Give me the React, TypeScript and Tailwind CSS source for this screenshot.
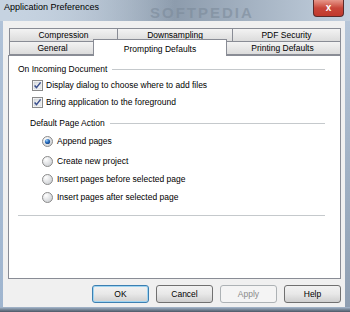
import React from 'react';

// Win7 style "Application Preferences" dialog

const font = { fontFamily: '"Liberation Sans", Arial, sans-serif' };

function CheckBox() {
  return (
    <svg width="11" height="11" viewBox="0 0 11 11" className="shrink-0">
      <defs>
        <linearGradient id="cbg" x1="0" y1="0" x2="1" y2="1">
          <stop offset="0" stopColor="#d9dcdf" />
          <stop offset="1" stopColor="#fafafa" />
        </linearGradient>
      </defs>
      <rect x="0.5" y="0.5" width="10" height="10" fill="#fff" stroke="#8a8a8a" />
      <rect x="2" y="2" width="7" height="7" fill="url(#cbg)" stroke="#c4c8cc" strokeWidth="0.6" />
      <path d="M2.6 5.4 L4.5 7.6 L8.6 2.4" fill="none" stroke="#3a4f8e" strokeWidth="1.5" />
    </svg>
  );
}

function Radio({ on }: { on?: boolean }) {
  return (
    <svg width="11" height="11" viewBox="0 0 11 11" className="shrink-0">
      <defs>
        <radialGradient id="rbg" cx="0.35" cy="0.3" r="0.8">
          <stop offset="0" stopColor="#ffffff" />
          <stop offset="1" stopColor="#c9ccd0" />
        </radialGradient>
        <radialGradient id="rdot" cx="0.35" cy="0.3" r="0.8">
          <stop offset="0" stopColor="#9fd0f5" />
          <stop offset="0.5" stopColor="#2a6fc0" />
          <stop offset="1" stopColor="#143f7c" />
        </radialGradient>
      </defs>
      <circle cx="5.5" cy="5.5" r="5" fill="url(#rbg)" stroke="#8c8c8c" />
      {on && <circle cx="5.5" cy="5.5" r="2.6" fill="url(#rdot)" />}
    </svg>
  );
}

function Tab({ label, w }: { label: string; w: string }) {
  return (
    <div
      className={`${w} h-full flex items-center justify-center border border-[#898c95] -ml-px first:ml-0 bg-gradient-to-b from-[#f3f3f3] to-[#dcdcdc] text-[8.5px] text-black`}
    >
      {label}
    </div>
  );
}

function Btn({ label, def, disabled }: { label: string; def?: boolean; disabled?: boolean }) {
  const cls = disabled
    ? 'border-[#adb2b5] bg-[#f4f4f4] text-[#8a8a8a]'
    : def
    ? 'border-[#3c7fb1] bg-gradient-to-b from-[#f2f2f2] via-[#e8e8e8] to-[#cfcfcf] text-black shadow-[inset_0_0_0_1px_#9fd4f1]'
    : 'border-[#707070] bg-gradient-to-b from-[#f2f2f2] via-[#e8e8e8] to-[#cfcfcf] text-black';
  return (
    <div className={`w-[57px] h-[18px] rounded-[3px] border flex items-center justify-center text-[8.5px] ${cls}`}>
      {label}
    </div>
  );
}

export default function App() {
  return (
    <div className="w-[350px] h-[312px] flex flex-col overflow-hidden bg-[#b4c6dc]" style={font}>
      {/* title bar */}
      <div className="h-[21px] relative bg-gradient-to-r from-[#c8d5e3] via-[#8d9cad] to-[#c3d0de]">
        <div className="absolute inset-0 bg-gradient-to-r from-[#c6d3e1] via-transparent to-transparent" />
        <span className="absolute left-[4px] top-[1px] text-[9px] text-black">Application Preferences</span>
        <span className="absolute left-[150px] top-[2px] text-[15px] font-bold tracking-[2px] text-[#7b8a9a]/60">
          SOFTPEDIA
        </span>
        <div className="absolute left-[313px] top-0 w-[31px] h-[17px] rounded-b-[4px] border border-t-0 border-[#5a2a2a] bg-gradient-to-b from-[#e6968a] via-[#c8463a] to-[#c0392d] flex items-center justify-center">
          <span className="text-white text-[10px] font-bold leading-none">x</span>
        </div>
      </div>

      <div className="flex-1 flex">
        <div className="w-[3px] bg-gradient-to-b from-[#b0c2d8] to-[#9fb5cf]" />

        {/* client area */}
        <div className="flex-1 bg-[#f0f0f0] pt-[7px] pl-[5px] flex flex-col">
          <div className="w-[333px]">
            {/* top tab row */}
            <div className="h-[14px] flex pl-[1px]">
              <Tab label="Compression" w="w-[109px]" />
              <Tab label="Downsampling" w="w-[116px]" />
              <Tab label="PDF Security" w="w-[109px]" />
            </div>
            {/* bottom tab row */}
            <div className="h-[14px] flex pl-[1px] -mt-px">
              <Tab label="General" w="w-[87px]" />
              <div className="relative z-10 w-[134px] h-[17px] -mt-[2px] -ml-[3px] -mr-[2px] bg-white border border-b-0 border-[#898c95] flex items-start justify-center pt-[3px] text-[8.5px] text-black">
                Prompting Defaults
              </div>
              <Tab label="Printing Defaults" w="w-[117px]" />
            </div>

            {/* pane */}
            <div className="h-[224px] bg-white border border-[#898c95] pt-[8px] pl-[9px] pr-[15px] text-[8.5px] text-black">
              <div className="h-[11px] flex items-center">
                <span>On Incoming Document</span>
                <div className="flex-1 ml-[5px] h-[2px] border-t border-[#c5c9cc] border-b border-b-white" />
              </div>
              <div className="mt-[2px] pl-[14px]">
                <div className="h-[17px] flex items-center gap-[3px]">
                  <CheckBox />
                  <span>Display dialog to choose where to add files</span>
                </div>
                <div className="h-[17px] flex items-center gap-[3px]">
                  <CheckBox />
                  <span>Bring application to the foreground</span>
                </div>
              </div>

              <div className="mt-[7px] pl-[12px]">
                <div className="h-[11px] flex items-center">
                  <span>Default Page Action</span>
                  <div className="flex-1 ml-[5px] h-[2px] border-t border-[#c5c9cc] border-b border-b-white" />
                </div>
                <div className="mt-[3px] pl-[12px]">
                  <div className="h-[18px] mb-[2px] flex items-center gap-[4px]">
                    <Radio on />
                    <span>Append pages</span>
                  </div>
                  <div className="h-[18px] flex items-center gap-[4px]">
                    <Radio />
                    <span>Create new project</span>
                  </div>
                  <div className="h-[18px] flex items-center gap-[4px]">
                    <Radio />
                    <span>Insert pages before selected page</span>
                  </div>
                  <div className="h-[18px] flex items-center gap-[4px]">
                    <Radio />
                    <span>Insert pages after selected page</span>
                  </div>
                </div>
              </div>
              <div className="mt-[9px] h-[2px] border-t border-[#c5c9cc] border-b border-b-white" />
            </div>

            {/* buttons */}
            <div className="mt-[6px] flex justify-end gap-[7px]">
              <Btn label="OK" def />
              <Btn label="Cancel" />
              <Btn label="Apply" disabled />
              <Btn label="Help" />
            </div>
          </div>
        </div>

        <div className="w-[5px] bg-gradient-to-b from-[#b6c6d9] to-[#8f9fb2]" />
      </div>
      <div className="h-[5px] bg-gradient-to-b from-[#a9bbd0] to-[#4c5866]" />
    </div>
  );
}
